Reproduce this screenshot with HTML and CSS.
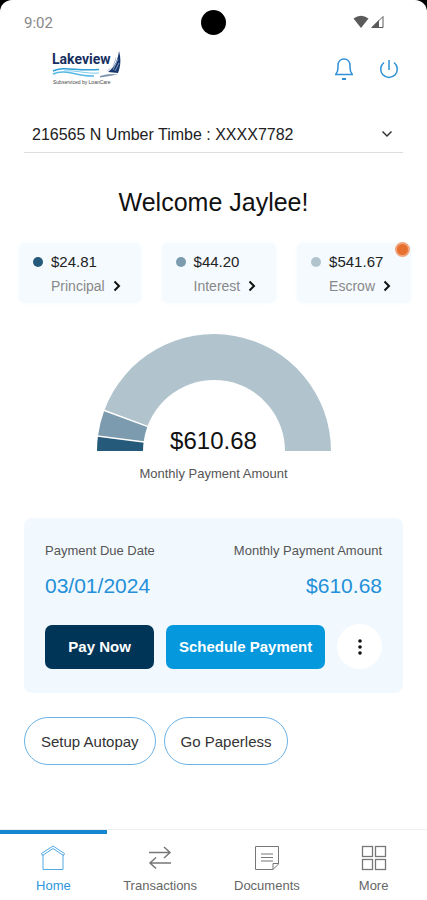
FILE: index.html
```
<!DOCTYPE html>
<html lang="en">
<head>
    <meta charset="UTF-8">
    <meta name="viewport" content="width=device-width, initial-scale=1.0">
    <title>Lakeview - Home</title>
    <link rel="stylesheet" href="styles.css">
</head>
<body>
<div class="screen">

    <!-- Phone status bar -->
    <div class="status-bar">
        <span class="time">9:02</span>
        <span class="camera"></span>
        <svg class="signal" width="32" height="14" viewBox="0 0 32 14">
            <path d="M0.500 3.500Q8-2 15.500 3.500L8 13Z" fill="#5a5a5a"/>
            <path d="M19 12.500L30 1.500V12.500Z" fill="none" stroke="#5a5a5a"/>
            <path d="M18 13L26 5V13Z" fill="#5a5a5a"/>
        </svg>
    </div>

    <header class="header">
        <a class="logo" href="#" aria-label="Lakeview home">
            <svg width="72" height="38" viewBox="0 0 72 38">
                <text class="logo-name" x="0" y="14">Lakeview</text>
                <path d="M1 21C12 16 22 21 47 19.500" fill="none" stroke="#2f9fd8" stroke-width="1.500"/>
                <path d="M1 24C14 18 25 27 42 26" fill="none" stroke="#55b9e6" stroke-width="1.500"/>
                <path d="M12 21C25 20 33 24 47 23" fill="none" stroke="#7fcbed"/>
                <path d="M67 1C69 8 69 16 66 23L56 22C63 17 66 9 67 1Z" fill="#16366e"/>
                <path d="M64 7C64 13 60 18 53 22C60 19 62 14 64 7Z" fill="#5d7ba8"/>
                <path d="M61 20L66 9M63 21L67 13" stroke="#b9c9de" stroke-width="0.700"/>
                <path d="M48 26Q57 23 66 24.500Q58 26 48 27.500Z" fill="#7f93b0"/>
                <text class="logo-tag" x="1" y="34">Subserviced by LoanCare</text>
            </svg>
        </a>
        <div class="header-actions">
            <button class="icon-button" aria-label="Notifications">
                <svg width="20" height="24" viewBox="0 0 20 24" fill="none" stroke="#2d8fd5" stroke-width="1.500">
                    <path d="M1 17.500H19M2 17C4.500 14 4 12 4 8.500C4 4.500 6.500 2 10 2C13.500 2 16 4.500 16 8.500C16 12 15.500 14 18 17"/>
                    <path d="M8 22H12" stroke-width="2"/>
                </svg>
            </button>
            <button class="icon-button" aria-label="Log out">
                <svg width="20" height="24" viewBox="0 0 20 24" fill="none" stroke="#2d8fd5" stroke-width="1.500">
                    <path d="M10 3V13"/>
                    <path d="M5 5.500A8.300 8.300 0 1 0 15 5.500"/>
                </svg>
            </button>
        </div>
    </header>

    <main class="content">
        <!-- Loan picker -->
        <div class="account">
            <select class="account-select" aria-label="Loan account">
                <option>216565 N Umber Timbe : XXXX7782</option>
            </select>
            <svg class="account-arrow" width="12" height="8" viewBox="0 0 12 8" fill="none" stroke="#333" stroke-width="1.500">
                <path d="M1.500 1.500L6 6L10.500 1.500"/>
            </svg>
        </div>

        <h1 class="welcome">Welcome Jaylee!</h1>

        <!-- Payment breakdown -->
        <div class="breakdown">
            <a class="part" href="#">
                <span class="dot principal"></span>
                <span class="part-amount">$24.81</span>
                <span class="part-label">Principal
                    <svg width="8" height="12" viewBox="0 0 8 12"><path d="M1.500 1.500L6 6L1.500 10.500"/></svg>
                </span>
            </a>
            <a class="part" href="#">
                <span class="dot interest"></span>
                <span class="part-amount">$44.20</span>
                <span class="part-label">Interest
                    <svg width="8" height="12" viewBox="0 0 8 12"><path d="M1.500 1.500L6 6L1.500 10.500"/></svg>
                </span>
            </a>
            <a class="part" href="#">
                <span class="dot escrow"></span>
                <span class="part-amount">$541.67</span>
                <span class="part-label">Escrow
                    <svg width="8" height="12" viewBox="0 0 8 12"><path d="M1.500 1.500L6 6L1.500 10.500"/></svg>
                </span>
                <span class="alert"></span>
            </a>
        </div>

        <div class="gauge">
            <svg class="gauge-chart" width="234" height="117" viewBox="0 0 234 117">
                <path d="M0 117A117 117 0 0 1 0.950 102.100L46.600 108A71 71 0 0 0 46 117Z" fill="#255a7a"/>
                <path d="M0.950 102.100A117 117 0 0 1 7.300 76.400L50.400 92.400A71 71 0 0 0 46.600 108Z" fill="#7c9bae"/>
                <path d="M7.300 76.400A117 117 0 0 1 234 117H188A71 71 0 0 0 50.400 92.400Z" fill="#b1c4ce"/>
                <path d="M0 102L47 108M6 76L51 92.600" stroke="#fff" stroke-width="1.500"/>
            </svg>
            <span class="gauge-total">$610.68</span>
        </div>
        <p class="gauge-label">Monthly Payment Amount</p>

        <!-- Payment due -->
        <section class="due">
            <dl class="due-info">
                <div>
                    <dt>Payment Due Date</dt>
                    <dd>03/01/2024</dd>
                </div>
                <div>
                    <dt>Monthly Payment Amount</dt>
                    <dd>$610.68</dd>
                </div>
            </dl>
            <div class="due-actions">
                <button class="button pay">Pay Now</button>
                <button class="button schedule">Schedule Payment</button>
                <button class="more" aria-label="More payment options">
                    <svg width="4" height="16" viewBox="0 0 4 16" fill="#111">
                        <circle cx="2" cy="2" r="1.800"/>
                        <circle cx="2" cy="8" r="1.800"/>
                        <circle cx="2" cy="14" r="1.800"/>
                    </svg>
                </button>
            </div>
        </section>

        <div class="pills">
            <button class="pill">Setup Autopay</button>
            <button class="pill">Go Paperless</button>
        </div>
    </main>

    <nav class="tabs">
        <a class="tab active" href="#">
            <svg width="26" height="26" viewBox="0 0 26 26" fill="none" stroke="#53a9e4">
                <path d="M3 9.500V24.500H23V9.500"/>
                <path d="M1.500 8.500L13 1L24.500 8.500L23.500 10.500L13 3.500L2.500 10.500Z"/>
            </svg>
            Home
        </a>
        <a class="tab" href="#">
            <svg width="26" height="26" viewBox="0 0 26 26" fill="none" stroke="#777" stroke-width="1.500">
                <path d="M2 7.500H23M17 2L23 7.500L17 13"/>
                <path d="M24 18H3M9 12.500L3 18L9 23.500"/>
            </svg>
            Transactions
        </a>
        <a class="tab" href="#">
            <svg width="26" height="26" viewBox="0 0 26 26" fill="none" stroke="#777">
                <path d="M1.500 1.500H24.500V19L19 24.500H1.500Z"/>
                <path d="M24.500 18.500H19V24.500"/>
                <path d="M7 9H19M7 12.500H19M7 16H19"/>
            </svg>
            Documents
        </a>
        <a class="tab" href="#">
            <svg width="26" height="26" viewBox="0 0 26 26" fill="none" stroke="#777" stroke-width="1.300">
                <rect x="1.500" y="1.500" width="10" height="10"/>
                <rect x="14.500" y="1.500" width="10" height="10"/>
                <rect x="1.500" y="14.500" width="10" height="10"/>
                <rect x="14.500" y="14.500" width="10" height="10"/>
            </svg>
            More
        </a>
    </nav>

</div>
</body>
</html>
```
FILE: styles.css
```
* {
    margin: 0;
    padding: 0;
    box-sizing: border-box;
}

body {
    background-color: #000;
    font-family: "Liberation Sans", Arial, sans-serif;
    color: #222;
}

a {
    color: inherit;
    text-decoration: none;
}

button, select {
    font-family: inherit;
    border: none;
    background: none;
}

svg {
    display: block;
}

/* Full-height column, tabs stay at the bottom */
.screen {
    min-height: 100vh;
    display: flex;
    flex-direction: column;
    background-color: #fff;
    border-radius: 12px 12px 0 0;
}

/* Status bar */
.status-bar {
    height: 44px;
    padding: 0 42px 0 24px;
    display: grid;
    grid-template-columns: 1fr auto 1fr;
    align-items: center;
}

.time {
    font-family: Roboto, sans-serif;
    font-size: 15px;
    color: #888;
    padding-top: 2px;
}

.camera {
    width: 25px;
    height: 25px;
    border-radius: 50%;
    background-color: #000;
    margin-left: 18px;
}

.signal {
    justify-self: end;
}

/* Header */
.header {
    display: flex;
    justify-content: space-between;
    align-items: center;
    height: 50px;
    padding: 0 28px 0 52px;
}

.logo-name {
    font-family: Roboto, sans-serif;
    font-size: 14px;
    font-weight: 700;
    fill: #17305f;
}

.logo-tag {
    font-size: 5px;
    fill: #444;
}

.header-actions {
    display: flex;
    gap: 25px;
}

.content {
    flex: 1;
    padding: 22px 24px 24px;
}

/* Loan picker */
.account {
    display: grid;
    align-items: center;
    border-bottom: 1px solid #ddd;
}

.account-select {
    grid-area: 1 / 1;
    width: 100%;
    height: 36px;
    padding: 0 32px 0 8px;
    appearance: none;
    font-size: 16px;
    color: #222;
}

.account-arrow {
    grid-area: 1 / 1;
    justify-self: end;
    margin-right: 10px;
    pointer-events: none;
}

.welcome {
    margin-top: 34px;
    font-size: 25px;
    line-height: 30px;
    font-weight: 400;
    text-align: center;
    color: #111;
}

/* Payment breakdown */
.breakdown {
    display: flex;
    justify-content: space-between;
    margin: 26px -8px 0 -5px;
}

.part {
    position: relative;
    display: grid;
    grid-template-columns: 10px auto;
    align-items: center;
    column-gap: 8px;
    row-gap: 6px;
    padding: 10px 20px 8px 14px;
    border-radius: 6px;
    background-color: #f5fafe;
    box-shadow: 0 0 6px #f5fafe;
}

.dot {
    width: 10px;
    height: 10px;
    border-radius: 50%;
}

.principal {
    background-color: #255a7a;
}

.interest {
    background-color: #7c9bae;
}

.escrow {
    background-color: #b1c4ce;
}

.part-amount {
    font-size: 15px;
    line-height: 18px;
}

.part-label {
    grid-column: 2;
    display: flex;
    align-items: center;
    gap: 8px;
    font-size: 14px;
    line-height: 18px;
    color: #888;
}

.part-label svg {
    fill: none;
    stroke: #111;
    stroke-width: 2;
}

.alert {
    position: absolute;
    top: -1px;
    right: 1px;
    width: 15px;
    height: 15px;
    border-radius: 50%;
    border: 2px solid #f0a57c;
    background-color: #e8702f;
}

/* Half-circle chart with the total inside */
.gauge {
    display: grid;
    justify-items: center;
    align-items: end;
    margin-top: 31px;
}

.gauge-chart, .gauge-total {
    grid-area: 1 / 1;
}

.gauge-total {
    font-size: 24px;
    line-height: 20px;
    color: #111;
}

.gauge-label {
    margin-top: 15px;
    font-size: 13px;
    line-height: 16px;
    text-align: center;
    color: #555;
}

/* Payment due */
.due {
    margin-top: 36px;
    padding: 24px 21px;
    border-radius: 8px;
    background-color: #f2f9fe;
}

.due-info {
    display: flex;
    justify-content: space-between;
}

.due-info div:last-child {
    text-align: right;
}

.due-info dt {
    font-size: 13px;
    line-height: 18px;
    color: #555;
}

.due-info dd {
    margin-top: 14px;
    font-size: 21px;
    line-height: 24px;
    color: #2490d8;
}

.due-actions {
    display: flex;
    align-items: center;
    gap: 12px;
    margin-top: 26px;
}

.button {
    height: 44px;
    border-radius: 7px;
    font-size: 15px;
    font-weight: 700;
    color: #fff;
}

.pay {
    flex: 110;
    background-color: #003557;
}

.schedule {
    flex: 160;
    background-color: #0598dc;
}

.more {
    width: 45px;
    height: 45px;
    border-radius: 50%;
    background-color: #fff;
    display: flex;
    justify-content: center;
    align-items: center;
}

/* Outlined shortcuts */
.pills {
    display: flex;
    gap: 8px;
    margin-top: 24px;
}

.pill {
    height: 48px;
    padding: 0 16px;
    border: 1px solid #6cb2e6;
    border-radius: 24px;
    font-size: 15px;
    color: #333;
}

/* Bottom tabs */
.tabs {
    display: grid;
    grid-template-columns: repeat(4, 1fr);
    border-top: 1px solid #eee;
}

.tab {
    display: flex;
    flex-direction: column;
    align-items: center;
    gap: 6px;
    padding: 11px 0 6px;
    border-top: 4px solid transparent;
    font-size: 13px;
    line-height: 17px;
    color: #666;
}

.tab.active {
    border-top-color: #1487d0;
    color: #2d96dc;
}
```
